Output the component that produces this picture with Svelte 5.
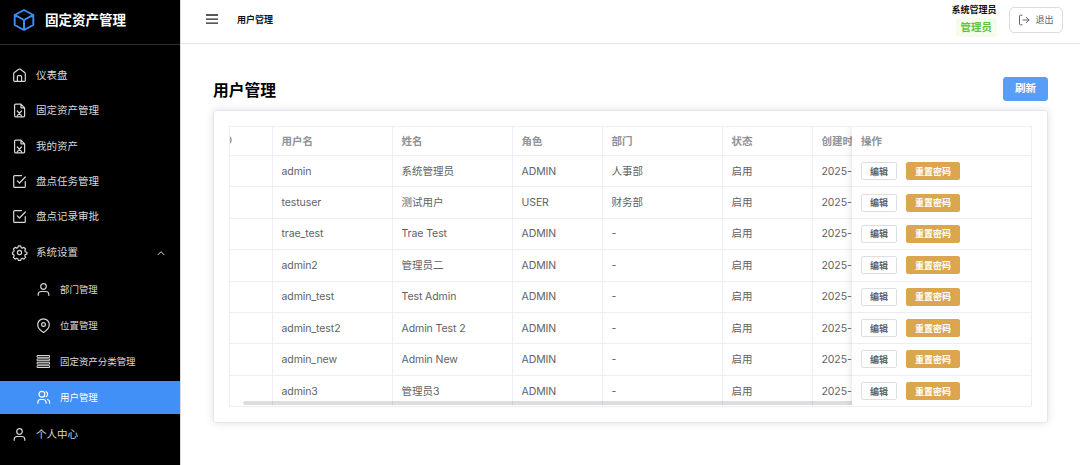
<script lang="ts">
	type NavItem = { label: string; icon: string; sub?: boolean; open?: boolean; active?: boolean };

	const nav: NavItem[] = [
		{ label: "仪表盘", icon: "home" },
		{ label: "固定资产管理", icon: "file" },
		{ label: "我的资产", icon: "file" },
		{ label: "盘点任务管理", icon: "check" },
		{ label: "盘点记录审批", icon: "check" },
		{ label: "系统设置", icon: "gear", open: true },
		{ label: "部门管理", icon: "user", sub: true },
		{ label: "位置管理", icon: "pin", sub: true },
		{ label: "固定资产分类管理", icon: "list", sub: true },
		{ label: "用户管理", icon: "users", sub: true, active: true },
		{ label: "个人中心", icon: "user" },
	];

	const columns = ["ID", "用户名", "姓名", "角色", "部门", "状态", "创建时间"];

	const users = [
		["admin", "系统管理员", "ADMIN", "人事部"],
		["testuser", "测试用户", "USER", "财务部"],
		["trae_test", "Trae Test", "ADMIN", "-"],
		["admin2", "管理员二", "ADMIN", "-"],
		["admin_test", "Test Admin", "ADMIN", "-"],
		["admin_test2", "Admin Test 2", "ADMIN", "-"],
		["admin_new", "Admin New", "ADMIN", "-"],
		["admin3", "管理员3", "ADMIN", "-"],
	];

	const isLatin = (value: string) => /^[\x20-\x7e]+$/.test(value);
</script>

{#snippet icon(name: string)}
	<svg class="icon" viewBox="0 0 15 15">
		{#if name === "home"}
			<path d="M2.7 13.3h9.6a1 1 0 0 0 1-1V5.8a1.5 1.5 0 0 0-.6-1.200L8.300 1.300a1.400 1.400 0 0 0-1.600 0L2.300 4.600a1.500 1.500 0 0 0-.6 1.200v6.500a1 1 0 0 0 1 1z" />
			<path d="M5.400 13.300V8.700a1 1 0 0 1 1-1h2.200a1 1 0 0 1 1 1v4.600" />
		{:else if name === "file"}
			<path d="M9 1.200H3.600a1 1 0 0 0-1 1v10.600a1 1 0 0 0 1 1h8a1 1 0 0 0 1-1V4.800zM9 1.200v3.600h3.600M5.300 8l4.200 4.700M9.500 8l-4.200 4.700" />
		{:else if name === "check"}
			<path d="M9.500 1.600H2.700a1 1 0 0 0-1 1v9.800a1 1 0 0 0 1 1h9.600a1 1 0 0 0 1-1V7.500" />
			<path d="M5.300 6.800l2.200 2.200 5.800-6" />
		{:else if name === "gear"}
			<circle cx="7.500" cy="7.500" r="2.100" />
			<path d="M6.300.9h2.400l.5 1.700 1.100.5 1.600-.8 1.700 1.700-.8 1.600.5 1.100 1.600.5v1.900l-1.600.5-.5 1.200.8 1.600-1.700 1.700-1.600-.8-1.100.5-.5 1.600H6.300l-.5-1.600-1.100-.5-1.600.8-1.700-1.700.8-1.600-.5-1.200-1.200-.5V7.200l1.200-.5.5-1.100-.8-1.600 1.700-1.700 1.600.8 1.100-.5z" />
		{:else if name === "user"}
			<circle cx="7.500" cy="4.500" r="2.800" />
			<path d="M2.200 13.300v-.8a3 3 0 0 1 3-3h4.600a3 3 0 0 1 3 3v.8" />
		{:else if name === "pin"}
			<path d="M13.300 6.600c0 3.600-2.900 6.200-5.800 7.900-2.900-1.700-5.800-4.300-5.800-7.900a5.800 5.800 0 0 1 11.600 0z" />
			<circle cx="7.500" cy="6.500" r="1.900" />
		{:else if name === "list"}
			<path stroke-width="1" d="M1.500 1.500h12v1.800h-12zM1.500 4.900h12v1.800h-12zM1.500 8.300h12v1.800h-12zM1.500 11.700h12v1.800h-12z" />
		{:else if name === "users"}
			<circle cx="5.900" cy="4.300" r="2.900" />
			<path d="M1.900 13.200v-.9a2.800 2.800 0 0 1 2.800-2.800h2.600a2.800 2.800 0 0 1 2.800 2.800v.9M10.100 1.700a2.900 2.900 0 0 1 0 5.100M11.600 9.500a2.800 2.800 0 0 1 2 2.800v.9" />
		{/if}
	</svg>
{/snippet}

<div class="app">
	<aside>
		<div class="logo">
			<svg viewBox="0 0 24 24">
				<path d="M12 2l9.300 5v10L12 22 2.700 17V7zM3 7.200L12 12l9-4.800M12 12v10" />
			</svg>
			<span>固定资产管理</span>
		</div>
		<nav>
			{#each nav as item}
				<div class="item" class:sub={item.sub} class:active={item.active} class:parent={item.open}>
					{@render icon(item.icon)}
					<span>{item.label}</span>
					{#if item.open}
						<svg class="arrow" viewBox="0 0 8 8"><path d="M1 5.700l3-3 3 3" /></svg>
					{/if}
				</div>
			{/each}
		</nav>
	</aside>

	<div class="main">
		<header>
			<svg class="burger" viewBox="0 0 12 10"><path d="M0 1h12M0 5.100h12M0 9.200h12" /></svg>
			<span class="crumb">用户管理</span>
			<div class="account">
				<span class="name">系统管理员</span>
				<span class="tag">管理员</span>
			</div>
			<button class="logout">
				<svg viewBox="0 0 12 12"><path d="M4 1.200H2.400a.9.9 0 0 0-.9.9v7.800a.9.9 0 0 0 .9.9H4M5 6h6M8.400 3.400L11 6 8.400 8.600" /></svg>
				退出
			</button>
		</header>

		<div class="title">
			<h1>用户管理</h1>
			<button class="refresh">刷新</button>
		</div>

		<section class="card">
			<div class="table">
				<div class="scroll">
					<div class="row head">
						{#each columns as column}
							<div class="cell">{column}</div>
						{/each}
					</div>
					{#each users as user}
						<div class="row">
							<div class="cell"></div>
							{#each user as value}
								<div class="cell" class:latin={isLatin(value)}>{value}</div>
							{/each}
							<div class="cell">启用</div>
							<div class="cell latin">2025-</div>
						</div>
					{/each}
					<div class="scrollbar"></div>
				</div>
				<div class="fixed">
					<div class="row head"><div class="cell">操作</div></div>
					{#each users as _}
						<div class="row">
							<div class="cell actions">
								<button>编辑</button>
								<button class="warning">重置密码</button>
							</div>
						</div>
					{/each}
				</div>
			</div>
		</section>
	</div>
</div>

<style>
	:global(body) {
		margin: 0;
		background: #fff;
	}

	* {
		box-sizing: border-box;
	}

	.app {
		display: flex;
		width: 1080px;
		height: 465px;
		overflow: hidden;
		font-family: Inter, "Noto Sans CJK SC", sans-serif;
		font-size: 10.5px;
		color: #606266;
	}

	svg {
		flex: none;
		fill: none;
		stroke: currentColor;
		stroke-linecap: round;
		stroke-linejoin: round;
	}

	button {
		display: flex;
		align-items: center;
		justify-content: center;
		padding: 0;
		font: inherit;
		line-height: 1;
		color: #606266;
		background: #fff;
		border: 1px solid #dcdfe6;
		border-radius: 3px;
	}

	aside {
		flex: none;
		width: 181px;
		background: #000;
		border-right: 1px solid #dcdcdc;
		color: #d8d8d8;
	}

	.logo {
		display: flex;
		align-items: center;
		gap: 9px;
		height: 45px;
		padding: 0 0 4px 12px;
		border-bottom: 1px solid #303030;
		font-size: 13.5px;
		font-weight: 700;
		color: #fff;
	}

	.logo svg {
		width: 24px;
		height: 24px;
		stroke: #3d8ff5;
		stroke-width: 1.9;
	}

	.logo span {
		padding-bottom: 2px;
	}

	nav {
		padding-top: 13px;
	}

	.item {
		display: flex;
		align-items: center;
		gap: 9px;
		height: 35.25px;
		padding: 0 15px 0 12px;
	}

	.item span {
		padding-bottom: 2px;
	}

	.item.parent {
		height: 38.75px;
		padding-bottom: 2px;
	}

	.item.sub {
		height: 33px;
		margin-bottom: 3px;
		padding-left: 36px;
		font-size: 9.45px;
	}

	.item.sub span {
		padding-bottom: 1px;
	}

	.item.active {
		background: #4090f7;
		color: #fff;
	}

	.icon {
		width: 15px;
		height: 15px;
		stroke-width: 1.2;
		overflow: visible;
	}

	.arrow {
		width: 8px;
		height: 8px;
		margin-left: auto;
	}

	.main {
		flex: 1;
		min-width: 0;
	}

	header {
		display: flex;
		align-items: center;
		height: 44px;
		padding: 0 17px 4px 25px;
		border-bottom: 1px solid #e6e6e6;
	}

	.burger {
		width: 12px;
		height: 10px;
		margin-bottom: 2px;
		stroke: #222;
		stroke-width: 1.3;
		stroke-linecap: butt;
	}

	.crumb {
		margin-left: 19px;
		font-size: 9px;
		font-weight: 700;
		color: #111;
	}

	.account {
		display: flex;
		flex-direction: column;
		align-items: flex-end;
		gap: 2px;
		margin: 1px 12.5px 0 auto;
	}

	.name {
		font-size: 9px;
		font-weight: 700;
		line-height: 12px;
		color: #111;
	}

	.tag {
		padding: 0 4.5px;
		border-radius: 3px;
		background: #f4fdec;
		font-weight: 700;
		line-height: 19px;
		color: #67c23a;
	}

	.logout {
		gap: 5px;
		width: 54px;
		height: 26px;
		border-color: #dcdcdc;
		border-radius: 5px;
		font-size: 9px;
	}

	.logout svg {
		width: 12px;
		height: 12px;
	}

	.title {
		display: flex;
		align-items: center;
		justify-content: space-between;
		height: 66px;
		padding: 24px 32px 0;
	}

	h1 {
		margin: 0;
		font-size: 15.75px;
		font-weight: 700;
		color: #000;
	}

	.refresh {
		width: 45px;
		height: 24px;
		border-color: #589df8;
		background: #589df8;
		font-weight: 700;
		color: #fff;
	}

	.card {
		width: 835px;
		height: 313px;
		margin-left: 32px;
		padding: 15px;
		border: 1px solid #e4e7ed;
		border-radius: 3px;
		box-shadow: 0 0 9px rgba(0, 0, 0, 0.12);
	}

	.table {
		display: flex;
		width: 803px;
		height: 281px;
		border: 1px solid #ebeef5;
	}

	.scroll {
		position: relative;
		width: 622px;
		overflow: hidden;
	}

	.row {
		display: grid;
		grid-template-columns: 42.5px 120px 120px 90px 120px 90px 1fr;
		height: 31.375px;
		border-bottom: 1px solid #ebeef5;
	}

	.row.head {
		height: 29px;
		font-weight: 600;
		color: #909399;
	}

	.row:nth-child(9) {
		border-bottom: 0;
	}

	.cell {
		display: flex;
		align-items: center;
		min-width: 0;
		padding: 0 0 2px 9px;
		border-right: 1px solid #ebeef5;
		white-space: nowrap;
		overflow: hidden;
	}

	.cell.latin {
		padding-bottom: 0;
		letter-spacing: -0.08px;
	}

	.cell:last-child {
		border-right: 0;
	}

	.scroll .cell:first-child {
		padding-left: 0;
		text-indent: -8.5px;
	}

	.scrollbar {
		position: absolute;
		left: 13px;
		right: -4px;
		bottom: 1px;
		height: 4.5px;
		border-radius: 3px;
		background: rgba(140, 142, 146, 0.3);
	}

	.fixed {
		position: relative;
		width: 179px;
		background: #fff;
		box-shadow: 0 0 8px rgba(0, 0, 0, 0.15);
		clip-path: inset(0 0 0 -10px);
	}

	.fixed .row {
		grid-template-columns: 1fr;
	}

	.fixed .actions {
		gap: 9px;
		padding-bottom: 0;
	}

	.actions button {
		width: 36px;
		height: 18px;
		border-radius: 2px;
		font-size: 9px;
		font-weight: 600;
	}

	.actions .warning {
		width: 54px;
		border-color: #dca550;
		background: #dca550;
		color: #fff;
	}
</style>
